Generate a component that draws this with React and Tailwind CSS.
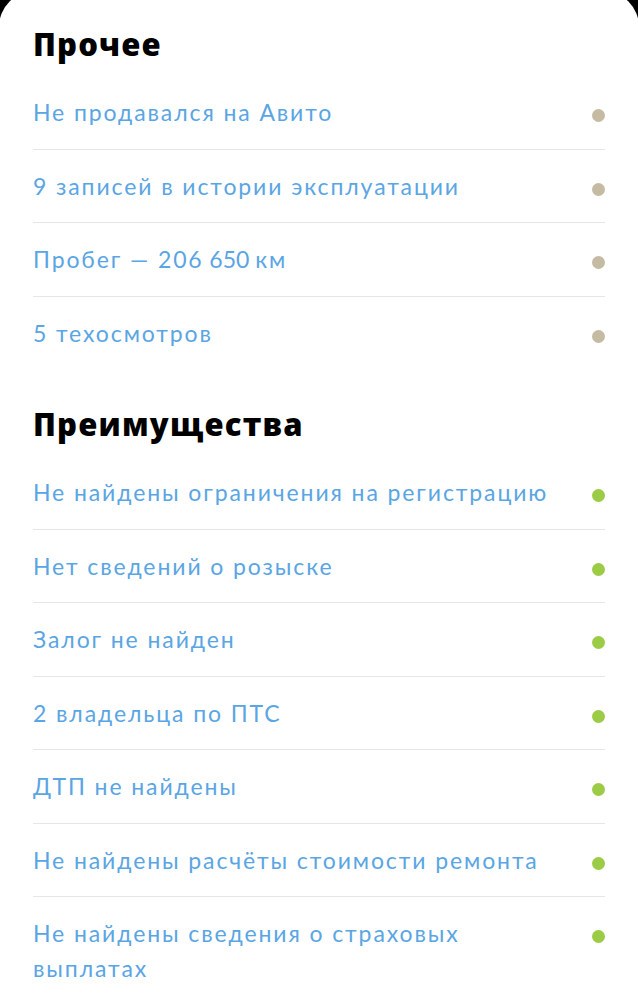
import React from "react";

const other = [
  "Не продавался на Авито",
  "9 записей в истории эксплуатации",
  "Пробег — 206\u202F650\u202Fкм",
  "5 техосмотров",
];

const pros = [
  "Не найдены ограничения на регистрацию",
  "Нет сведений о розыске",
  "Залог не найден",
  "2 владельца по ПТС",
  "ДТП не найдены",
  "Не найдены расчёты стоимости ремонта",
  "Не найдены сведения о страховых выплатах",
];

function Row({ text, dot, last }) {
  return (
    <div
      className={
        "flex items-start justify-between pt-[19px] pb-[18.5px] " +
        (last ? "border-b border-transparent" : "border-b border-[#e6e6e6]")
      }
    >
      <span className="pr-[30px] text-[23px] leading-[35px] text-[#5aa5e3] font-['Lato','Liberation_Sans',sans-serif] tracking-[1.9px]">
        {text}
      </span>
      <span className={"mt-[14px] h-[13px] w-[13px] shrink-0 rounded-full " + dot} />
    </div>
  );
}

export default function App() {
  return (
    <div className="h-[1000px] w-[638px] overflow-hidden bg-black">
      <div className="-mx-px -mt-[9px] h-[1100px] rounded-[36px] bg-white px-[34px] pt-[35px]">
        <div>
          <h2 className="mb-[14px] text-[31px] leading-[36px] font-extrabold text-black font-['Open_Sans','Liberation_Sans',sans-serif] tracking-[1.2px]">
            Прочее
          </h2>
          {other.map((t, i) => (
            <Row key={t} text={t} dot="bg-[#c5bba3]" last={i === other.length - 1} />
          ))}
        </div>
        <div className="mt-[36px]">
          <h2 className="mb-[14px] text-[31px] leading-[36px] font-extrabold text-black font-['Open_Sans','Liberation_Sans',sans-serif] tracking-[1.2px]">
            Преимущества
          </h2>
          {pros.map((t, i) => (
            <Row key={t} text={t} dot="bg-[#9ccb45]" last={i === pros.length - 1} />
          ))}
        </div>
      </div>
    </div>
  );
}
